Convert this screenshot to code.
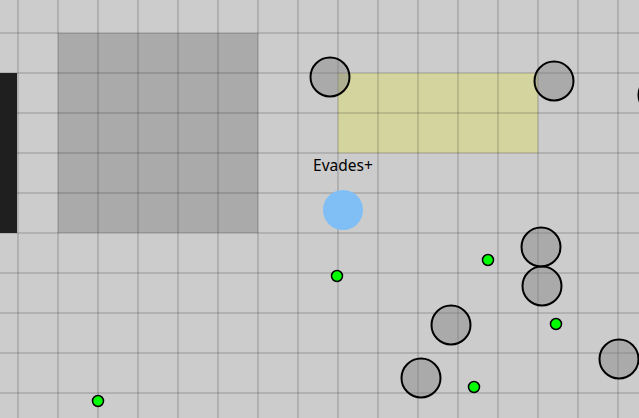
import React from "react";

const enemies: [number, number][] = [
  [330, 77],
  [554, 81],
  [658, 95],
  [541, 247],
  [542, 286],
  [451, 325],
  [421, 378],
  [619, 359],
];

const pellets: [number, number][] = [
  [337, 276],
  [488, 260],
  [556, 324],
  [474, 387],
  [98, 401],
];

export default function App() {
  const vLines: number[] = [];
  for (let x = 18; x < 660; x += 40) vLines.push(x);
  const hLines: number[] = [];
  for (let y = -7; y < 430; y += 40) hLines.push(y);
  return (
    <div className="w-[639px] h-[418px] overflow-hidden bg-[#cccccc]">
      <svg width="639" height="418" viewBox="0 0 639 418" className="block">
        <rect x="0" y="0" width="639" height="418" fill="#cccccc" />
        <rect x="58" y="33" width="200" height="200" fill="#aaaaaa" />
        <rect x="338" y="73" width="200" height="80" fill="#d4d49f" />
        {vLines.map((x) => (
          <line key={"v" + x} x1={x} y1={0} x2={x} y2={418} stroke="rgba(0,0,0,0.13)" strokeWidth={2} />
        ))}
        {hLines.map((y) => (
          <line key={"h" + y} x1={0} y1={y} x2={639} y2={y} stroke="rgba(0,0,0,0.13)" strokeWidth={2} />
        ))}
        <rect x="0" y="73" width="17" height="160" fill="#1f1f1f" />
        {pellets.map(([x, y], i) => (
          <circle key={"p" + i} cx={x} cy={y} r={5.5} fill="#00ff00" stroke="#000" strokeWidth={1.5} />
        ))}
        {enemies.map(([x, y], i) => (
          <circle key={"e" + i} cx={x} cy={y} r={19.5} fill="rgba(128,128,128,0.45)" stroke="#000" strokeWidth={2} />
        ))}
        <circle cx={343} cy={210} r={20} fill="#7fbff5" />
        <text
          x={343}
          y={171}
          textAnchor="middle"
          fontSize="15.5"
          fill="#000"
          style={{ fontFamily: '"Noto Sans", sans-serif' }}
        >
          Evades+
        </text>
      </svg>
    </div>
  );
}
